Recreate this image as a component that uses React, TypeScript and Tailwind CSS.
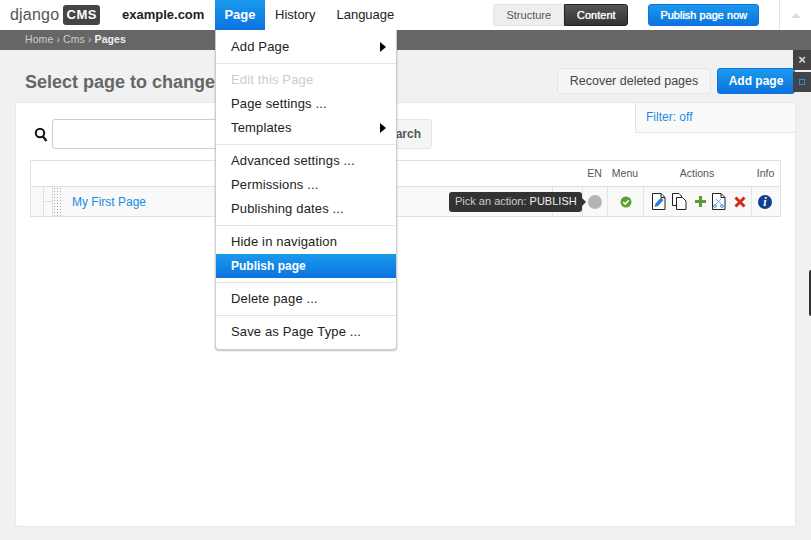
import { FunctionComponent, ReactNode } from "react";

const MenuItem: FunctionComponent<{ label: string; arrow?: boolean; disabled?: boolean; active?: boolean }> = ({
  label,
  arrow,
  disabled,
  active,
}) => {
  let color = "text-[#222] tracking-[0.15px]";
  if (disabled) color = "text-[#ccc] tracking-[0.15px]";
  if (active) color = "text-white text-[12px] font-bold bg-gradient-to-b from-[#1b9aec] to-[#0e72e0]";
  return (
    <div className={"relative h-6 pl-[15px] leading-[24px] " + color}>
      {label}
      {arrow && (
        <span className="absolute right-[10px] top-[7px] h-0 w-0 border-y-[5px] border-l-[6px] border-y-transparent border-l-black" />
      )}
    </div>
  );
};

const MenuDivider = () => <div className="my-[4px] h-px bg-[#e4e4e4]" />;

const PageMenu = () => (
  <div className="absolute left-[215px] top-[30px] z-20 w-[182px] rounded-b-[4px] border-x border-b border-[#ccc] bg-white py-[5px] text-[13px] shadow-[0_1px_2px_rgba(0,0,0,0.25)]">
    <MenuItem label="Add Page" arrow />
    <MenuDivider />
    <MenuItem label="Edit this Page" disabled />
    <MenuItem label="Page settings ..." />
    <MenuItem label="Templates" arrow />
    <MenuDivider />
    <MenuItem label="Advanced settings ..." />
    <MenuItem label="Permissions ..." />
    <MenuItem label="Publishing dates ..." />
    <MenuDivider />
    <MenuItem label="Hide in navigation" />
    <MenuItem label="Publish page" active />
    <MenuDivider />
    <MenuItem label="Delete page ..." />
    <MenuDivider />
    <MenuItem label="Save as Page Type ..." />
  </div>
);

const Toolbar = () => (
  <div className="flex h-[30px] items-center bg-white text-[13px] text-[#222]">
    <div className="ml-[10px] flex w-[112px] items-center">
      <span className="text-[16px] tracking-[0.2px] text-[#555]">django</span>
      <span className="ml-[4px] w-[37px] rounded-[3px] bg-[#454545] text-center text-[13px] font-bold leading-[20px] tracking-[0.5px] text-white">
        CMS
      </span>
    </div>
    <span className="w-[93px] font-bold">example.com</span>
    <div className="h-full w-[50px] bg-gradient-to-b from-[#1b9aec] to-[#0e72e0] text-center font-bold leading-[30px] text-white">
      Page
    </div>
    <span className="ml-[10px]">History</span>
    <span className="ml-[21px]">Language</span>
    <div className="ml-[99px] flex h-[22px] text-[11px] leading-[20px]">
      <div className="w-[71px] rounded-l-[3px] border border-[#e2e2e2] bg-[#eee] text-center text-[#555]">Structure</div>
      <div className="w-[64px] rounded-r-[3px] border border-[#222] bg-gradient-to-b from-[#555] to-[#333] text-center text-white [text-shadow:0_0_1px_#fff]">
        Content
      </div>
    </div>
    <div className="ml-[20px] h-[22px] w-[111px] rounded-[3px] border border-[#0e72e0] bg-gradient-to-b from-[#1b9aec] to-[#0e72e0] text-center text-[11px] leading-[20px] text-white [text-shadow:0_0_1px_#fff]">
      Publish page now
    </div>
    <div className="ml-[20px] flex h-full flex-1 items-center justify-center border-l border-[#e4e4e4]">
      <span className="h-0 w-0 border-x-[5px] border-b-[5px] border-x-transparent border-b-[#ddd]" />
    </div>
  </div>
);

const Cell: FunctionComponent<{ w: string; children?: ReactNode }> = ({ w, children }) => (
  <div className={"flex h-full items-center justify-center border-l border-[#e4e4e4] " + w}>{children}</div>
);

const DocIcon: FunctionComponent<{ children?: ReactNode }> = ({ children }) => (
  <svg width="15" height="17" viewBox="0 0 15 17">
    <path d="M1.5 .5H10L14 4.5V16.5H1.5Z" fill="#fff" stroke="#222" />
    <path d="M10 .5V4.5H14" fill="none" stroke="#222" />
    {children}
  </svg>
);

const Actions = () => (
  <div className="ml-[2px] flex items-center">
    <DocIcon>
      <path d="M3.5 14L4.5 10.5L10 4.5L12.5 7L7 13Z" fill="#2a7fd5" />
    </DocIcon>
    <svg className="ml-[6px]" width="15" height="17" viewBox="0 0 15 17">
      <path d="M.5 .5H7L9.5 3V12.5H.5Z" fill="#fff" stroke="#222" />
      <path d="M4.5 4.5H10.5L14 8V16.5H4.5Z" fill="#fff" stroke="#222" />
    </svg>
    <svg className="ml-[8px]" width="11" height="11" viewBox="0 0 11 11">
      <path d="M4 0H7V4H11V7H7V11H4V7H0V4H4Z" fill="#5a9e2f" />
    </svg>
    <span className="ml-[5px] flex">
      <DocIcon>
        <path d="M4 12L10 6M5 6L11 12" stroke="#6aaee6" strokeWidth="1" fill="none" />
        <circle cx="4" cy="13" r="1.4" fill="none" stroke="#3a8fdc" />
        <circle cx="11" cy="13" r="1.4" fill="none" stroke="#3a8fdc" />
      </DocIcon>
    </span>
    <svg className="ml-[8px]" width="12" height="12" viewBox="0 0 12 12">
      <path d="M1.5 1.5L10.5 10.5M10.5 1.5L1.5 10.5" stroke="#d42c12" strokeWidth="3" />
    </svg>
  </div>
);

const PageTable = () => (
  <div className="mt-[11px] border border-[#e0e0e0] text-[10.5px]">
    <div className="flex h-[26px] items-center border-b border-[#e0e0e0] text-[#555]">
      <div className="flex-1" />
      <div className="w-[25px] text-center">EN</div>
      <div className="w-[36px] text-center">Menu</div>
      <div className="w-[108px] text-center">Actions</div>
      <div className="w-[29px] text-center">Info</div>
    </div>
    <div className="flex h-[29px] items-center bg-[#f9f9f9]">
      <div className="h-full w-[12px]" />
      <div className="relative h-full w-[9px] border-l border-[#e0e0e0]">
        <div className="absolute left-0 top-[14px] h-px w-full bg-[#e0e0e0]" />
      </div>
      <div className="h-full w-[11px] border-l border-[#e0e0e0] bg-[radial-gradient(circle,#aaa_1px,transparent_1px)] bg-[length:3px_3px]" />
      <a className="ml-[9px] flex-1 text-[12px] text-[#1a8ce6]">My First Page</a>
      <Cell w="w-[30px]" />
      <Cell w="w-[25px]">
        <span className="h-[14px] w-[14px] rounded-full bg-[#b5b5b5]" />
      </Cell>
      <Cell w="w-[36px]">
        <svg width="12" height="12" viewBox="0 0 12 12">
          <circle cx="6" cy="6" r="5.5" fill="#5aa02c" />
          <path d="M3.2 6L5.2 8L8.8 4.2" fill="none" stroke="#fff" strokeWidth="1.6" />
        </svg>
      </Cell>
      <Cell w="w-[108px]">
        <Actions />
      </Cell>
      <Cell w="w-[29px]">
        <span className="mr-[2px] flex h-[14px] w-[14px] items-center justify-center rounded-full bg-[#0f3f8f] font-['Liberation_Serif',serif] text-[12px] font-bold italic text-white">
          i
        </span>
      </Cell>
    </div>
  </div>
);

const App = () => (
  <div className="relative h-[540px] w-[811px] overflow-hidden bg-[#f1f1f1] font-['Liberation_Sans',Arial,sans-serif]">
    <Toolbar />
    <div className="h-[20px] bg-[#666] pl-[25px] text-[10.5px] leading-[19px] tracking-[0.1px] text-[#ccc]">
      Home › Cms › <span className="font-bold text-[#eee]">Pages</span>
    </div>

    <div className="flex h-[52px] items-start justify-between pl-[25px] pr-[16px]">
      <h1 className="mt-[21px] text-[18px] font-bold leading-[22px] text-[#666]">Select page to change</h1>
      <div className="mt-[18px] flex gap-[6px]">
        <div className="h-[26px] w-[154px] rounded-[3px] border border-[#e4e4e4] bg-[#f5f5f5] text-center text-[12.5px] leading-[24px] text-[#444]">
          Recover deleted pages
        </div>
        <div className="h-[26px] w-[78px] rounded-[3px] border border-[#0e72e0] bg-gradient-to-b from-[#1b9aec] to-[#0e72e0] text-center text-[12px] font-bold leading-[24px] text-white">
          Add page
        </div>
      </div>
    </div>

    <div className="ml-[15px] h-[425px] w-[781px] rounded-[3px] border border-[#e8e8e8] bg-white">
      <div className="flex justify-end">
        <div className="h-[30px] w-[160px] border-b border-l border-[#e4e4e4] bg-[#fafafa] pl-[10px] text-[12px] leading-[28px] text-[#1a8ce6]">
          Filter: off
        </div>
      </div>
      <div className="px-[14px]">
        <div className="-mt-[14px] flex items-center pl-[4px]">
          <svg width="14" height="15" viewBox="0 0 14 15">
            <circle cx="6" cy="6" r="4.2" fill="none" stroke="#111" strokeWidth="2" />
            <path d="M9 9.5L12.5 14" stroke="#111" strokeWidth="2.2" />
          </svg>
          <div className="ml-[4px] h-[30px] w-[320px] rounded-[3px] border border-[#ccc] bg-white" />
          <div className="-ml-[1px] h-[30px] w-[61px] rounded-r-[3px] border border-[#e4e4e4] bg-[#f5f5f5] pr-[10px] text-right text-[12px] font-bold leading-[28px] text-[#555]">
            Search
          </div>
        </div>
        <PageTable />
      </div>
    </div>

    <PageMenu />

    <div className="absolute left-[449px] top-[192px] z-10 flex h-[20px] items-center">
      <div className="h-full w-[133px] rounded-[3px] bg-[#333] pl-[6px] text-[11px] leading-[19px] text-[#ccc]">
        Pick an action: <span className="text-[#eee]">PUBLISH</span>
      </div>
      <span className="-ml-px h-0 w-0 border-y-[5px] border-l-[5px] border-y-transparent border-l-[#333]" />
    </div>

    <div className="absolute left-[793px] top-[50px] flex flex-col gap-[2px]">
      <div className="flex h-5 w-[18px] items-center justify-center bg-[#444] text-[13px] font-bold text-[#ddd]">×</div>
      <div className="flex h-5 w-[18px] items-center justify-center bg-[#444]">
        <span className="h-[6px] w-[6px] border border-[#2a8fe0]" />
      </div>
    </div>
    <div className="absolute left-[809px] top-[270px] h-[46px] w-[2px] rounded-l-[2px] bg-[#333]" />
  </div>
);

export default App;
